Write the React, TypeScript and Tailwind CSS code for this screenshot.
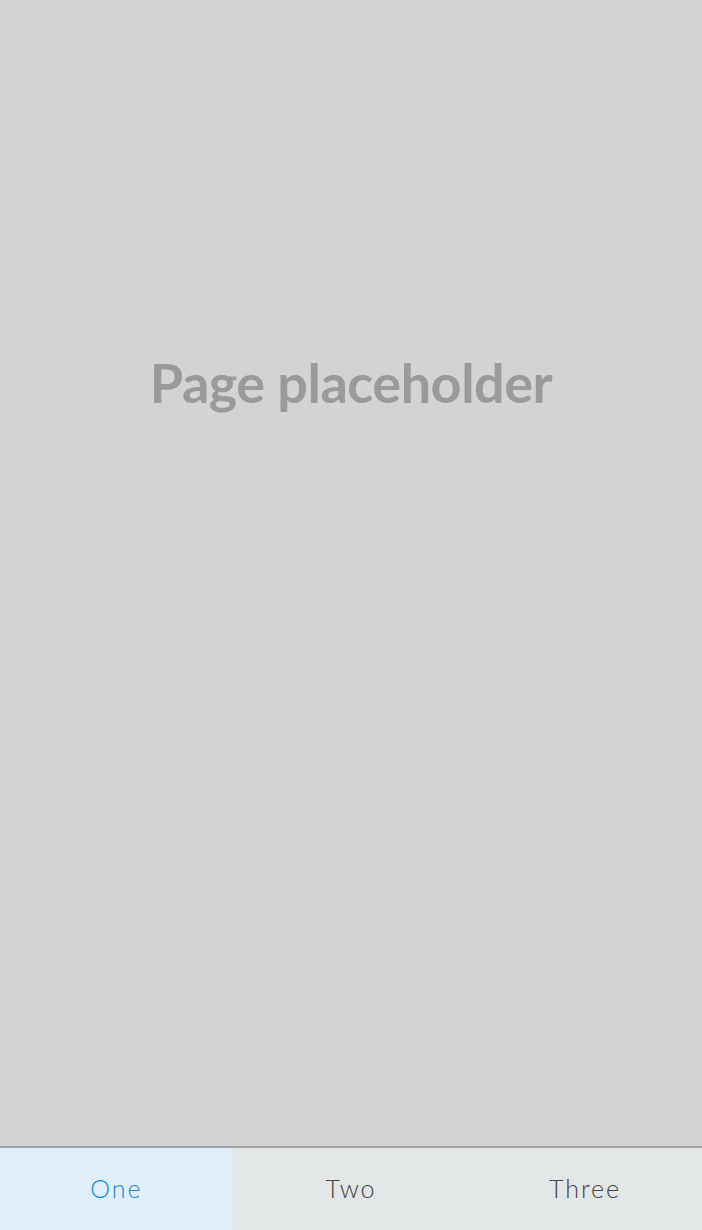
import { useState } from 'react'

const tabs = ['One', 'Two', 'Three']

export default function App() {
  const [active, setActive] = useState(0)

  return (
    <div className="flex h-[1230px] w-full flex-col bg-[#d3d3d3] font-['Lato','Noto_Sans',sans-serif]">
      <div className="flex flex-1 justify-center pt-[350px]">
        <h1 className="h-fit text-[54px] leading-[66px] font-bold tracking-[-0.5px] text-[#9a9a9a]">Page placeholder</h1>
      </div>
      <nav className="grid h-[84px] grid-cols-3 border-t-2 border-[#a3a3a3]">
        {tabs.map((t, i) => (
          <button
            key={t}
            onClick={() => setActive(i)}
            className={
              i === active
                ? 'border-r border-[#d2e4ef] bg-[#dfeef8] text-[25px] font-light tracking-[2px] text-[#1a88e0]'
                : 'bg-[#e3e6e6] text-[25px] font-light tracking-[2px] text-[#444]'
            }
          >
            {t}
          </button>
        ))}
      </nav>
    </div>
  )
}
